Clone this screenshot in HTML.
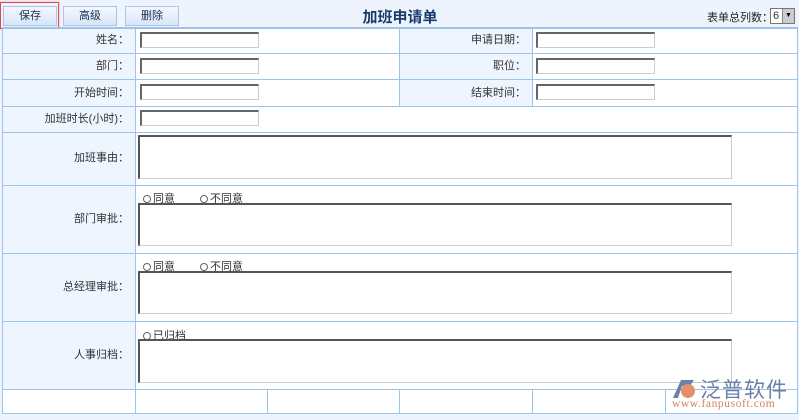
<!DOCTYPE html><html><head><meta charset="utf-8"><style>
*{margin:0;padding:0;box-sizing:border-box}
body{width:799px;height:420px;background:#eef4fd;font-family:"Liberation Sans","Noto Sans CJK SC",sans-serif;font-size:11px;color:#333;position:relative;overflow:hidden}
.a{position:absolute}
.btn{position:absolute;top:6px;height:20px;width:54px;border:1px solid #a9c6e8;background:linear-gradient(#f4f8fe,#d8e6f7);text-align:center;line-height:18px;color:#1c2f55;font-size:11px}
.lab{position:absolute;background:#eef5fe;text-align:right;padding-right:6px;color:#333}
.cell{position:absolute;background:#fff}
.h{position:absolute;height:1px;background:#9cc3ea}
.v{position:absolute;width:1px;background:#9cc3ea}
.in{position:absolute;width:119px;height:16px;border:1px solid #ccc;border-top:2px solid #666;border-left:2px solid #666;background:#fff}
.ta{position:absolute;left:138px;width:594px;border:1px solid #ccc;border-top:2px solid #555;border-left:2px solid #555;background:#fff}
.rd{position:absolute;font-size:11px;color:#333}
.rd i{display:inline-block;width:8px;height:8px;border:1px solid #666;border-radius:50%;margin-right:2px;vertical-align:-1px;background:#fff}
</style></head><body>
<div class="btn" style="left:3px">保存</div>
<div class="a" style="left:0;top:2px;width:59px;height:27px;border:1px solid #e04a4a;box-shadow:0 0 2px #f99"></div>
<div class="btn" style="left:63px">高级</div>
<div class="btn" style="left:125px">删除</div>
<div class="a" style="left:340px;top:6px;width:120px;text-align:center;font-size:15px;font-weight:bold;color:#1b3a6b">加班申请单</div>
<div class="a" style="left:707px;top:9px;font-size:11px;color:#222">表单总列数：</div>
<div class="a" style="left:770px;top:8px;width:25px;height:16px;border:1px solid #777;background:#fff;font-size:11px;line-height:14px;padding-left:2px">6<span style="position:absolute;right:0;top:0;width:12px;height:14px;background:#ccc;border-left:1px solid #888;font-size:7px;line-height:14px;text-align:center;color:#000">▼</span></div>

<div class="lab" style="left:2px;top:27px;width:133px;height:26px;line-height:26px">姓名：</div>
<div class="lab" style="left:2px;top:53px;width:133px;height:27px;line-height:27px">部门：</div>
<div class="lab" style="left:2px;top:80px;width:133px;height:26px;line-height:26px">开始时间：</div>
<div class="lab" style="left:2px;top:106px;width:133px;height:26px;line-height:26px">加班时长(小时)：</div>
<div class="lab" style="left:2px;top:132px;width:133px;height:53px;line-height:53px">加班事由：</div>
<div class="lab" style="left:2px;top:185px;width:133px;height:68px;line-height:68px">部门审批：</div>
<div class="lab" style="left:2px;top:253px;width:133px;height:68px;line-height:68px">总经理审批：</div>
<div class="lab" style="left:2px;top:321px;width:133px;height:68px;line-height:68px">人事归档：</div>
<div class="lab" style="left:399px;top:27px;width:133px;height:26px;line-height:26px">申请日期：</div>
<div class="lab" style="left:399px;top:53px;width:133px;height:27px;line-height:27px">职位：</div>
<div class="lab" style="left:399px;top:80px;width:133px;height:26px;line-height:26px">结束时间：</div>
<div class="cell" style="left:135px;top:27px;width:264px;height:79px"></div>
<div class="cell" style="left:532px;top:27px;width:265px;height:79px"></div>
<div class="cell" style="left:135px;top:106px;width:662px;height:283px"></div>
<div class="cell" style="left:2px;top:389px;width:795px;height:24px"></div>
<div class="h" style="left:2px;top:27px;width:796px;height:2px"></div>
<div class="h" style="left:2px;top:53px;width:796px"></div>
<div class="h" style="left:2px;top:79px;width:796px"></div>
<div class="h" style="left:2px;top:106px;width:796px"></div>
<div class="h" style="left:2px;top:132px;width:796px"></div>
<div class="h" style="left:2px;top:185px;width:796px"></div>
<div class="h" style="left:2px;top:253px;width:796px"></div>
<div class="h" style="left:2px;top:321px;width:796px"></div>
<div class="h" style="left:2px;top:389px;width:796px"></div>
<div class="h" style="left:2px;top:413px;width:796px"></div>
<div class="v" style="left:2px;top:27px;height:387px"></div>
<div class="v" style="left:797px;top:27px;height:387px"></div>
<div class="v" style="left:135px;top:27px;height:387px"></div>
<div class="v" style="left:399px;top:27px;height:79px"></div>
<div class="v" style="left:532px;top:27px;height:79px"></div>
<div class="v" style="left:267px;top:389px;height:25px"></div>
<div class="v" style="left:399px;top:389px;height:25px"></div>
<div class="v" style="left:532px;top:389px;height:25px"></div>
<div class="v" style="left:665px;top:389px;height:25px"></div>
<div class="in" style="left:140px;top:32px"></div>
<div class="in" style="left:140px;top:58px"></div>
<div class="in" style="left:140px;top:84px"></div>
<div class="in" style="left:140px;top:110px"></div>
<div class="in" style="left:536px;top:32px"></div>
<div class="in" style="left:536px;top:58px"></div>
<div class="in" style="left:536px;top:84px"></div>
<div class="ta" style="top:135px;height:44px"></div>
<div class="rd" style="left:143px;top:190px"><i></i>同意</div>
<div class="rd" style="left:200px;top:190px"><i></i>不同意</div>
<div class="ta" style="top:203px;height:43px"></div>
<div class="rd" style="left:143px;top:258px"><i></i>同意</div>
<div class="rd" style="left:200px;top:258px"><i></i>不同意</div>
<div class="ta" style="top:271px;height:43px"></div>
<div class="rd" style="left:143px;top:327px"><i></i>已归档</div>
<div class="ta" style="top:339px;height:44px"></div>
<svg class="a" style="left:670px;top:376px" width="30" height="26" viewBox="0 0 30 26"><path d="M3 22 L11 4 L24 4 L20 10 L12 10 L8 22Z" fill="#6b7fa8"/><circle cx="18" cy="15" r="7" fill="#e0906a"/></svg>
<div class="a" style="left:700px;top:374px;font-size:21px;color:#6b7fa8;letter-spacing:1px">泛普软件</div>
<div class="a" style="left:672px;top:398px;font-size:11.5px;color:#d08060;font-family:'Liberation Serif',serif;letter-spacing:.6px">www.fanpusoft.com</div>
</body></html>
